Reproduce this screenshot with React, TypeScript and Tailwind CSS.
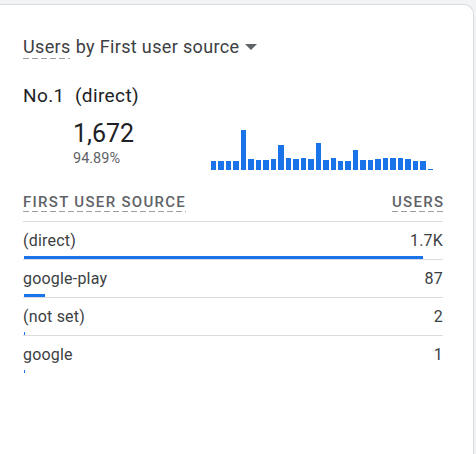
import React from 'react'

const bars = [9, 9, 9, 9, 40, 11, 10, 10, 11, 25, 12, 11, 12, 11, 27, 10, 12, 9, 9, 20, 10, 10, 11, 12, 12, 12, 11, 9, 9, 1]

const rows = [
    { name: '(direct)', value: '1.7K', bar: 399 },
    { name: 'google-play', value: '87', bar: 21 },
    { name: '(not set)', value: '2', bar: 1 },
    { name: 'google', value: '1', bar: 1 },
]

const dashed = 'h-px bg-[repeating-linear-gradient(to_right,#9aa0a6_0_6px,transparent_6px_9px)]'

export default function App() {
    return (
        <div className="min-h-[454px] bg-[#f1f3f4] pt-[4px] font-['Roboto',sans-serif]">
            <div className="h-[450px] w-[474px] bg-white border-t border-r border-[#dadce0] rounded-tr-[10px] pl-[23px] pr-[30px] pt-[30px]">
                {/* Title */}
                <div className="flex items-center text-[18px] leading-[24px] tracking-[0.35px] text-[#3c4043]">
                    <span>Users</span>
                    <span className="ml-[5px]">by First user source</span>
                    <svg className="ml-[6px] w-[12px] h-[12px] text-[#5f6368]" viewBox="0 0 12 12" fill="currentColor">
                        <path d="M0 3h12L6 9z" />
                    </svg>
                </div>
                <div className={`${dashed} w-[47px] mt-[-1px]`} />

                {/* Top result */}
                <div className="mt-[25px] text-[19px] leading-[24px] tracking-[0.4px] text-[#202124]">No.1&nbsp;&nbsp;(direct)</div>
                <div className="flex items-end">
                    <div className="pl-[50px] w-[188px] pb-[1px]">
                        <div className="mt-[12px] text-[25px] leading-[28px] text-[#202124]">1,672</div>
                        <div className="mt-[1px] text-[14.5px] leading-[20px] text-[#5f6368]">94.89%</div>
                    </div>
                    <div className="flex items-end gap-[2px] w-[222px] h-[44px]">
                        {bars.map((h, i) => (
                            <div key={i} className="flex-1 bg-[#1a73e8]" style={{ height: h }} />
                        ))}
                    </div>
                </div>

                {/* Table header */}
                <div className="mt-[23px] flex justify-between text-[15px] leading-[18px] font-medium tracking-[1.3px] text-[#5f6368]">
                    <div className="flex flex-col">
                        <span>FIRST USER SOURCE</span>
                        <div className={dashed} />
                    </div>
                    <div className="flex flex-col">
                        <span className="mr-[-1.3px]">USERS</span>
                        <div className={dashed} />
                    </div>
                </div>

                {/* Rows */}
                <div className="mt-[9px]">
                    {rows.map((r) => (
                        <div key={r.name} className="border-t border-[#dadce0]">
                            <div className="flex justify-between items-center h-[34px] pt-[3px] text-[16px] tracking-[0.2px] text-[#3c4043]">
                                <span>{r.name}</span>
                                <span>{r.value}</span>
                            </div>
                            <div className="h-[3px] ml-[1px] bg-[#1a73e8]" style={{ width: r.bar }} />
                        </div>
                    ))}
                </div>
            </div>
        </div>
    )
}
